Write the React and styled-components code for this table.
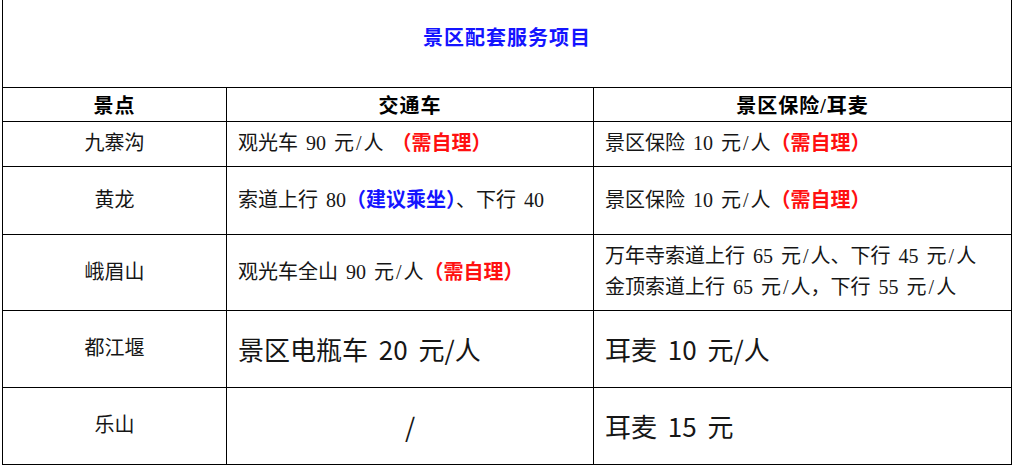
import styled, { createGlobalStyle } from "styled-components";

const GlobalStyle = createGlobalStyle`
  html, body {
    margin: 0;
    padding: 0;
    background: #ffffff;
  }
`;

const Page = styled.div`
  padding-left: 2px;
  width: 1017px;
  box-sizing: border-box;
`;

const Table = styled.table`
  border-collapse: collapse;
  table-layout: fixed;
  width: 1009px;
  font-family: "Liberation Serif", "Noto Sans CJK SC", serif;
  color: #000;
`;

const Row = styled.tr`
  height: ${({ h }) => h}px;
`;

const TitleCell = styled.td`
  border: 1px solid #000;
  border-top: none;
  text-align: center;
  vertical-align: middle;
  padding: 0 0 14px;
  font-size: 20px;
  font-weight: bold;
  color: #1414ff;
  letter-spacing: 1px;
`;

const HeadCell = styled.th`
  border: 1px solid #000;
  text-align: center;
  vertical-align: middle;
  padding: 0;
  font-size: 20px;
  font-weight: bold;
  letter-spacing: 1px;
`;

const Cell = styled.td`
  border: 1px solid #000;
  vertical-align: middle;
  text-align: ${({ center }) => (center ? "center" : "left")};
  padding: 0 0 0 ${({ center }) => (center ? 0 : 11)}px;
  font-size: ${({ big }) => (big ? 26 : 20)}px;
  font-family: ${({ big }) =>
    big
      ? '"Noto Sans CJK SC", "Noto Sans", sans-serif'
      : '"Liberation Serif", "Noto Sans CJK SC", serif'};
  line-height: ${({ big }) => (big ? 1.2 : 1.55)};
  word-spacing: ${({ big }) => (big ? 5 : 3)}px;
  white-space: nowrap;
  color: #161616;
`;

const Slash = styled.span`
  padding: 0 2px;
`;

const Note = styled.span`
  font-weight: bold;
  color: ${({ tone }) => (tone === "blue" ? "#1414ff" : "#ff1010")};
`;

const S = () => <Slash>/</Slash>;

const rows = [
  {
    name: "九寨沟",
    h: 45,
    bus: (
      <>
        观光车 90 元<S />人 <Note>（需自理）</Note>
      </>
    ),
    ins: (
      <>
        景区保险 10 元<S />人<Note>（需自理）</Note>
      </>
    ),
  },
  {
    name: "黄龙",
    h: 68,
    bus: (
      <>
        索道上行 80<Note tone="blue">（建议乘坐）</Note>、下行 40
      </>
    ),
    ins: (
      <>
        景区保险 10 元<S />人<Note>（需自理）</Note>
      </>
    ),
  },
  {
    name: "峨眉山",
    h: 76,
    bus: (
      <>
        观光车全山 90 元<S />人<Note>（需自理）</Note>
      </>
    ),
    ins: (
      <>
        万年寺索道上行 65 元<S />人、下行 45 元<S />人
        <br />
        金顶索道上行 65 元<S />人，下行 55 元<S />人
      </>
    ),
  },
  { name: "都江堰", h: 77, big: true, bus: "景区电瓶车 20 元/人", ins: "耳麦 10 元/人" },
  { name: "乐山", h: 77, big: true, busCenter: true, bus: "/", ins: "耳麦 15 元" },
];

export default function App() {
  return (
    <Page>
      <GlobalStyle />
      <Table>
        <colgroup>
          <col style={{ width: 224 }} />
          <col style={{ width: 367 }} />
          <col style={{ width: 418 }} />
        </colgroup>
        <tbody>
          <Row h={87}>
            <TitleCell colSpan={3}>景区配套服务项目</TitleCell>
          </Row>
          <Row h={34}>
            <HeadCell>景点</HeadCell>
            <HeadCell>交通车</HeadCell>
            <HeadCell>景区保险/耳麦</HeadCell>
          </Row>
          {rows.map((r) => (
            <Row key={r.name} h={r.h}>
              <Cell center>{r.name}</Cell>
              <Cell big={r.big} center={r.busCenter}>
                {r.bus}
              </Cell>
              <Cell big={r.big}>{r.ins}</Cell>
            </Row>
          ))}
        </tbody>
      </Table>
    </Page>
  );
}
